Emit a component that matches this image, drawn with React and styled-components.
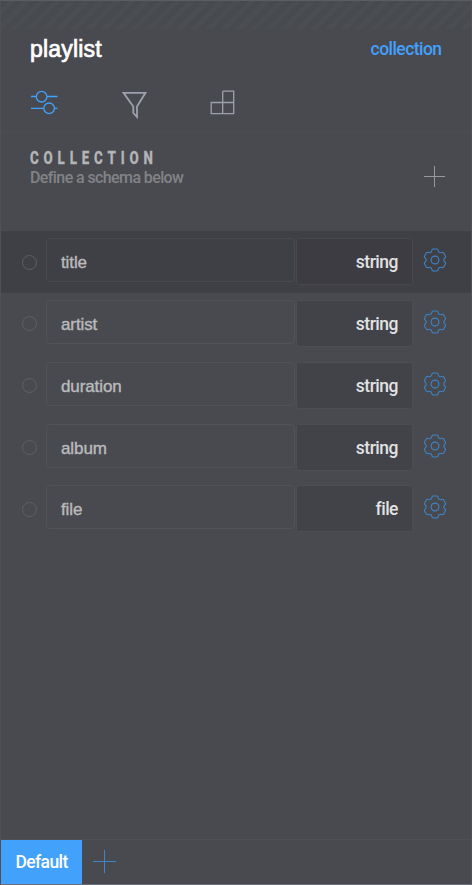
import React from "react";
import styled, { createGlobalStyle } from "styled-components";

const GlobalStyle = createGlobalStyle`
  * { box-sizing: border-box; }
  body { margin: 0; background: #494a4f; }
`;

const Panel = styled.main`
  display: flex;
  flex-direction: column;
  width: 472px;
  height: 885px;
  overflow: hidden;
  background: #494a4f;
  border: 1px solid #4f5155;
  border-top-color: #5b5d62;
  border-bottom-color: #6a6f78;
  font-family: Roboto, sans-serif;
`;

const DragBar = styled.div`
  height: 28px;
  background: repeating-linear-gradient(135deg, #494a4f 0 5.3px, #4a4e53 6px 10px, #494a4f 10.6px);
`;

const Header = styled.header`
  display: flex;
  justify-content: space-between;
  align-items: center;
  height: 40px;
  padding: 0 29.5px 0 29px;
`;

const Title = styled.h1`
  margin: 0;
  font: 400 23px/40px "Liberation Sans", sans-serif;
  letter-spacing: 0.2px;
  color: #fff;
  -webkit-text-stroke: 0.7px #fff;
`;

const Kind = styled.span`
  font-size: 17.5px;
  font-weight: 500;
  line-height: 38px;
  letter-spacing: -0.55px;
  color: #42a1fb;
`;

const Tabs = styled.nav`
  display: flex;
  height: 64px;
  padding: 19px 0 0 29px;
  gap: 60px;
  border-bottom: 1px solid #4c4d52;
`;

const TabIcon = styled.svg`
  display: block;
  width: 30px;
  height: 34px;
  fill: none;
  stroke: ${(p) => (p.$active ? "#42a1fb" : "#9da1ad")};
  stroke-width: ${(p) => p.$weight || 1.2};
`;

const Section = styled.section`
  display: flex;
  justify-content: space-between;
  height: 98px;
  padding: 13px 26px 0 29px;
`;

const SectionTitle = styled.h2`
  margin: 0;
  width: 180px;
  font-size: 17.5px;
  line-height: 24px;
  height: 22px;
  font-weight: 800;
  letter-spacing: 6.4px;
  color: #b4b5b7;
  -webkit-text-stroke: 0.3px #b4b5b7;
  transform: scaleX(0.76);
  transform-origin: left;
`;

const Hint = styled.p`
  margin: 0;
  font-size: 16px;
  line-height: 19px;
  font-weight: 500;
  letter-spacing: -0.6px;
  color: #828386;
`;

const PlusIcon = styled.svg`
  display: block;
  width: ${(p) => p.$size}px;
  height: ${(p) => p.$size}px;
  margin: ${(p) => p.$margin};
  stroke: ${(p) => p.$color};
  stroke-width: 1;
`;

const Row = styled.div`
  display: flex;
  align-items: flex-start;
  height: 61.75px;
  padding: 7.3px 0 0 21px;
  background: ${(p) => (p.$active ? "#3f4045" : "transparent")};
`;

const Ring = styled.span`
  width: 15px;
  height: 15px;
  margin: 16.4px 9px 0 0;
  border: 1px solid #5f6064;
  border-radius: 50%;
`;

const NameField = styled.div`
  width: 249px;
  height: 44px;
  padding-left: 14px;
  border: 1px solid ${(p) => (p.$active ? "#48494e" : "#525358")};
  border-radius: 4px;
  font: 400 17px/47px "Liberation Sans", sans-serif;
  letter-spacing: -0.1px;
  color: #b9babc;
  -webkit-text-stroke: 0.4px #b9babc;
`;

const TypeField = styled.div`
  width: 117px;
  height: 47px;
  margin: 0 0 0 1px;
  padding-right: 14px;
  border: 1px solid ${(p) => (p.$active ? "#47474c" : "#4d4e53")};
  border-radius: 3px;
  background: ${(p) => (p.$active ? "#3d3c42" : "#424348")};
  font-size: 17.5px;
  line-height: 46px;
  font-weight: 500;
  letter-spacing: -0.5px;
  text-align: right;
  color: #e1e2e3;
`;

const GearIcon = styled.svg`
  width: 24px;
  height: 24px;
  margin: 10px 0 0 10px;
  fill: none;
  stroke: #3d84c8;
  stroke-width: 1.1;
`;

const Rows = styled.div`
  flex: 1;
`;

const Footer = styled.footer`
  display: flex;
  height: 45px;
  border-top: 1px solid #505156;
`;

const DefaultTab = styled.button`
  width: 81px;
  height: 44px;
  padding: 0;
  border: 0;
  background: #42a1fb;
  color: #fff;
  font: 500 17.5px/44px Roboto, sans-serif;
  letter-spacing: -0.6px;
`;

const turn = (x, y, step) => {
  const a = (step * Math.PI) / 3;
  const c = Math.cos(a);
  const s = Math.sin(a);
  return `${(x * c - y * s).toFixed(2)} ${(x * s + y * c).toFixed(2)}`;
};

const tooth = (k) => {
  const p = (x, y) => turn(x, y, k);
  return `${k ? "L" : "M"}${p(-4.4, -7.6)}Q${p(-3.5, -8.1)} ${p(-3.2, -9.4)}Q${p(-3, -11)} ${p(-1.7, -11)}L${p(1.7, -11)}Q${p(3, -11)} ${p(3.2, -9.4)}Q${p(3.5, -8.1)} ${p(4.4, -7.6)}`;
};

const gearPath = [0, 1, 2, 3, 4, 5].map(tooth).join("") + "Z";

const Gear = () => (
  <GearIcon viewBox="-12 -12 24 24">
    <path d={gearPath} />
    <circle r="3.9" />
  </GearIcon>
);

const Plus = ({ size, margin, color }) => (
  <PlusIcon $size={size} $margin={margin} $color={color} viewBox={`0 0 ${size} ${size}`}>
    <path d={`M${size / 2} 0V${size}M0 ${size / 2}H${size}`} />
  </PlusIcon>
);

const fields = [
  { name: "title", type: "string", active: true },
  { name: "artist", type: "string" },
  { name: "duration", type: "string" },
  { name: "album", type: "string" },
  { name: "file", type: "file" },
];

export default function App() {
  return (
    <>
      <GlobalStyle />
      <Panel>
        <DragBar />
        <Header>
          <Title>playlist</Title>
          <Kind>collection</Kind>
        </Header>
        <Tabs>
          <TabIcon $active $weight={1.3} viewBox="0 0 30 34">
            <path d="M1 8.5H6.2M17 8.5H27.5M1 20.3H13.6M24.6 20.3H27.5" />
            <circle cx="11.6" cy="8.7" r="5.3" />
            <circle cx="19.1" cy="20.3" r="5.3" />
          </TabIcon>
          <TabIcon $weight={1.8} viewBox="0 0 30 34">
            <path d="M3.5 4.8H25.5L17 18.5V29L13.3 25V18.5Z" />
          </TabIcon>
          <TabIcon $weight={1.3} viewBox="0 0 30 34">
            <path d="M12.7 3.2H23.7V25.7H1.2V14.5H23.7M12.7 3.2V25.7" />
          </TabIcon>
        </Tabs>
        <Section>
          <div>
            <SectionTitle>COLLECTION</SectionTitle>
            <Hint>Define a schema below</Hint>
          </div>
          <Plus size={21} margin="20px 0 0" color="#97989b" />
        </Section>
        <Rows>
          {fields.map((f) => (
            <Row key={f.name} $active={f.active}>
              <Ring />
              <NameField $active={f.active}>{f.name}</NameField>
              <TypeField $active={f.active}>{f.type}</TypeField>
              <Gear />
            </Row>
          ))}
        </Rows>
        <Footer>
          <DefaultTab>Default</DefaultTab>
          <Plus size={23} margin="10px 0 0 11px" color="#3d84c8" />
        </Footer>
      </Panel>
    </>
  );
}
